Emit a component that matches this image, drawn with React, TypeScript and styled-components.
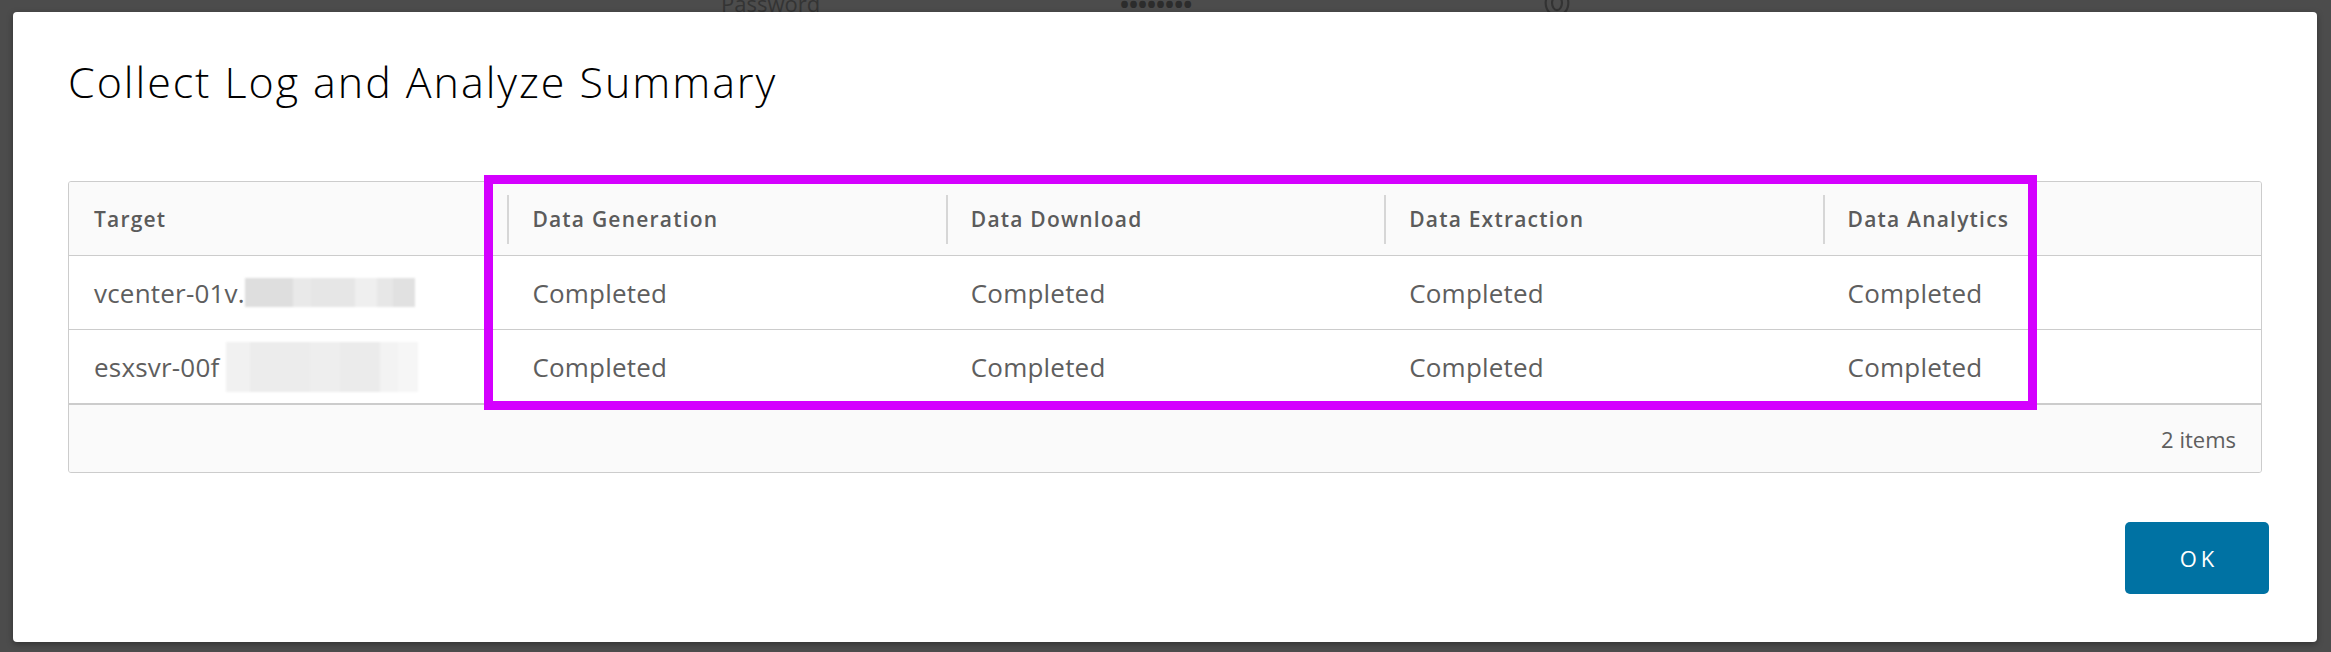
import React from "react";
import styled, { createGlobalStyle } from "styled-components";

const GlobalStyle = createGlobalStyle`
  html, body {
    margin: 0;
    padding: 0;
    width: 2331px;
    height: 652px;
    overflow: hidden;
    background: #4c4c4c;
    font-family: "Open Sans", "Noto Sans", sans-serif;
  }
  #root { width: 2331px; height: 652px; position: relative; }
`;

const Backdrop = styled.div`
  width: 2331px;
  height: 652px;
  background: #4c4c4c;
  overflow: hidden;
`;

const BackForm = styled.div`
  display: flex;
  align-items: center;
  margin-top: -14px;
  padding-left: 721px;
  height: 34px;
`;

const BackLabel = styled.span`
  font-size: 22px;
  width: 399px;
  color: #343434;
`;

const BackDots = styled.span`
  font-size: 24px;
  font-weight: 700;
  width: 420px;
  color: #2c2c2c;
`;

const Modal = styled.div`
  position: absolute;
  left: 13px;
  top: 12px;
  width: 2304px;
  height: 630px;
  box-sizing: border-box;
  background: #ffffff;
  border-radius: 4px;
  box-shadow: 0 2px 6px rgba(0, 0, 0, 0.35);
  padding: 48px 48px 48px 55px;
  display: flex;
  flex-direction: column;
`;

const Title = styled.h3`
  margin: 0;
  font-family: "Open Sans", sans-serif;
  font-weight: 300;
  font-size: 43px;
  line-height: 43px;
  color: #000;
  letter-spacing: 1.95px;
`;

const GridWrap = styled.div`
  position: relative;
  margin-top: 78px;
  width: 2194px;
`;

const Grid = styled.div`
  border: 1px solid #cccccc;
  border-radius: 3px;
  overflow: hidden;
  background: #fafafa;
`;

const Row = styled.div<{ $header?: boolean }>`
  display: grid;
  grid-template-columns: repeat(5, 1fr);
  height: 73px;
  align-items: center;
  background: ${(p) => (p.$header ? "#fafafa" : "#ffffff")};
  border-bottom: 1px solid #cccccc;
`;

const HeadCell = styled.div<{ $sep?: boolean }>`
  position: relative;
  height: 100%;
  display: flex;
  align-items: center;
  padding-left: 25px;
  font-size: 21px;
  font-weight: 600;
  letter-spacing: 1.2px;
  color: #5b5b5b;
  &::before {
    content: "";
    display: ${(p) => (p.$sep ? "block" : "none")};
    position: absolute;
    left: 0;
    top: 13px;
    bottom: 11px;
    width: 2px;
    background: #d6d6d6;
  }
`;

const Cell = styled.div`
  display: flex;
  align-items: center;
  padding-left: 25px;
  font-size: 26px;
  font-weight: 400;
  letter-spacing: 0.2px;
  color: #5e5e5e;
  white-space: nowrap;
`;

const Redact = styled.span<{ $offset: number }>`
  display: inline-flex;
  margin-left: ${(p) => p.$offset}px;
  filter: blur(0.8px);
`;

const RedactCell = styled.span<{ $w: number; $h: number; $c: string }>`
  display: inline-block;
  width: ${(p) => p.$w}px;
  height: ${(p) => p.$h}px;
  background: ${(p) => p.$c};
`;

const Footer = styled.div`
  height: 67px;
  border-top: 2px solid #cccccc;
  margin-top: -1px;
  display: flex;
  align-items: center;
  justify-content: flex-end;
  padding-right: 25px;
  font-size: 22px;
  color: #5e5e5e;
  background: #fafafa;
`;

const Highlight = styled.div`
  position: absolute;
  left: 416px;
  top: -6px;
  width: 1553px;
  height: 235px;
  box-sizing: border-box;
  border: 9px solid #d400ff;
  pointer-events: none;
`;

const Actions = styled.div`
  margin-top: auto;
  display: flex;
  justify-content: flex-end;
`;

const PrimaryButton = styled.button`
  width: 144px;
  height: 72px;
  border: none;
  border-radius: 5px;
  background: #0072a3;
  color: #ffffff;
  font-family: "Open Sans", sans-serif;
  font-size: 22px;
  font-weight: 500;
  letter-spacing: 4px;
  padding: 0 0 0 4px;
  cursor: pointer;
`;

const columns = ["Target", "Data Generation", "Data Download", "Data Extraction", "Data Analytics"];

const redact1 = [
  { w: 48, c: "#dedede" },
  { w: 18, c: "#e9e9e9" },
  { w: 44, c: "#e6e6e6" },
  { w: 22, c: "#efefef" },
  { w: 16, c: "#e7e7e7" },
  { w: 22, c: "#e1e1e1" },
];

const redact2 = [
  { w: 24, c: "#f1f1f1" },
  { w: 60, c: "#ececec" },
  { w: 30, c: "#eeeeee" },
  { w: 40, c: "#ebebeb" },
  { w: 18, c: "#f3f3f3" },
  { w: 20, c: "#f6f6f6" },
];

const rows = [
  { target: "vcenter-01v.", redact: redact1, h: 29, offset: 0 },
  { target: "esxsvr-00f", redact: redact2, h: 50, offset: 7 },
];

export default function App() {
  return (
    <>
      <GlobalStyle />
      <Backdrop>
        <BackForm>
          <BackLabel>Password</BackLabel>
          <BackDots>••••••••</BackDots>
          <svg width="34" height="34" viewBox="0 0 24 24" fill="none" stroke="#333" strokeWidth="1.5">
            <ellipse cx="12" cy="12" rx="8" ry="9" />
            <ellipse cx="12" cy="12" rx="3.5" ry="5" />
          </svg>
        </BackForm>
      </Backdrop>
      <Modal>
        <Title>Collect Log and Analyze Summary</Title>
        <GridWrap>
          <Grid>
            <Row $header>
              {columns.map((c, i) => (
                <HeadCell key={c} $sep={i > 0}>
                  {c}
                </HeadCell>
              ))}
            </Row>
            {rows.map((r) => (
              <Row key={r.target}>
                <Cell>
                  {r.target}
                  <Redact $offset={r.offset}>
                    {r.redact.map((b, i) => (
                      <RedactCell key={i} $w={b.w} $h={r.h} $c={b.c} />
                    ))}
                  </Redact>
                </Cell>
                <Cell>Completed</Cell>
                <Cell>Completed</Cell>
                <Cell>Completed</Cell>
                <Cell>Completed</Cell>
              </Row>
            ))}
            <Footer>2 items</Footer>
          </Grid>
          <Highlight />
        </GridWrap>
        <Actions>
          <PrimaryButton>OK</PrimaryButton>
        </Actions>
      </Modal>
    </>
  );
}
